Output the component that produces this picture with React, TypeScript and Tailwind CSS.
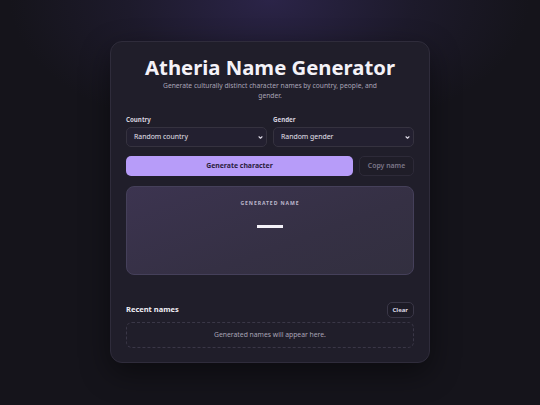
import React from "react";

function Chevron() {
  return (
    <svg width="5" height="5" viewBox="0 0 10 10" fill="none" stroke="#e0dce8" strokeWidth="2.2" strokeLinecap="round" strokeLinejoin="round">
      <path d="M2 3.5 L5 6.5 L8 3.5" />
    </svg>
  );
}

function Select({ label, value }: { label: string; value: string }) {
  return (
    <div className="flex flex-col">
      <div className="text-[6.2px] font-bold text-[#d4d0de] leading-[8px] mb-[3px] mt-[1px]">{label}</div>
      <div className="h-[20px] rounded-[5px] border border-[#35323f] bg-[#232030] flex items-center justify-between pl-[7px] pr-[3px]">
        <span className="text-[6.9px] text-[#e4e0ec]">{value}</span>
        <Chevron />
      </div>
    </div>
  );
}

export default function App() {
  return (
    <div
      className="w-[540px] h-[405px] overflow-hidden flex justify-center pt-[41px]"
      style={{
        fontFamily: '"Noto Sans", "Open Sans", sans-serif',
        background:
          "radial-gradient(ellipse 260px 140px at 270px 0px, #2b2448 0%, #1d1a2b 55%, #15141b 100%)",
      }}
    >
      <div className="w-[320px] h-[322px] rounded-[12px] border border-[#2f2c3b] bg-[#201e2a] shadow-[0_10px_30px_rgba(0,0,0,0.45)] px-[15px] pt-[12px] flex flex-col">
        <h1 className="text-center text-[20.3px] leading-[26px] font-bold text-[#f4f2f8]">Atheria Name Generator</h1>
        <p className="text-center text-[6.7px] leading-[10px] text-[#a9a4b6] mx-auto max-w-[230px] mt-[1px]">
          Generate culturally distinct character names by country, people, and gender.
        </p>
        <div className="grid grid-cols-2 gap-[6px] mt-[14px]">
          <Select label="Country" value="Random country" />
          <Select label="Gender" value="Random gender" />
        </div>
        <div className="flex gap-[6px] mt-[9px]">
          <button className="flex-1 h-[20px] rounded-[5px] bg-[#b79cf9] text-[6.9px] font-bold text-[#2b2140]">Generate character</button>
          <button className="w-[55px] h-[20px] rounded-[5px] border border-[#2d2a38] bg-[#1f1d28] text-[6.9px] font-semibold text-[#7c7788]">Copy name</button>
        </div>
        <div
          className="mt-[10px] h-[89px] rounded-[8px] border border-[#45405a] flex flex-col items-center pt-[12px]"
          style={{ background: "linear-gradient(160deg, #3c3450 0%, #353044 60%, #322f3f 100%)" }}
        >
          <div className="text-[5.1px] font-bold tracking-[0.18em] text-[#bdb7cc] leading-[8px]">GENERATED NAME</div>
          <div className="mt-[18px] w-[26px] h-[3px] bg-[#f4f2f8]" />
        </div>
        <div className="flex items-center justify-between mt-[27px]">
          <div className="text-[7.5px] font-bold text-[#f0eef5]">Recent names</div>
          <button className="h-[16px] px-[5px] rounded-[5px] border border-[#3a3747] bg-[#1d1b26] text-[6px] font-bold text-[#dcd8e4]">Clear</button>
        </div>
        <div className="mt-[4px] h-[26px] rounded-[6px] border border-dashed border-[#3a3747] flex items-center justify-center text-[6.8px] text-[#a9a4b6]">
          Generated names will appear here.
        </div>
      </div>
    </div>
  );
}
